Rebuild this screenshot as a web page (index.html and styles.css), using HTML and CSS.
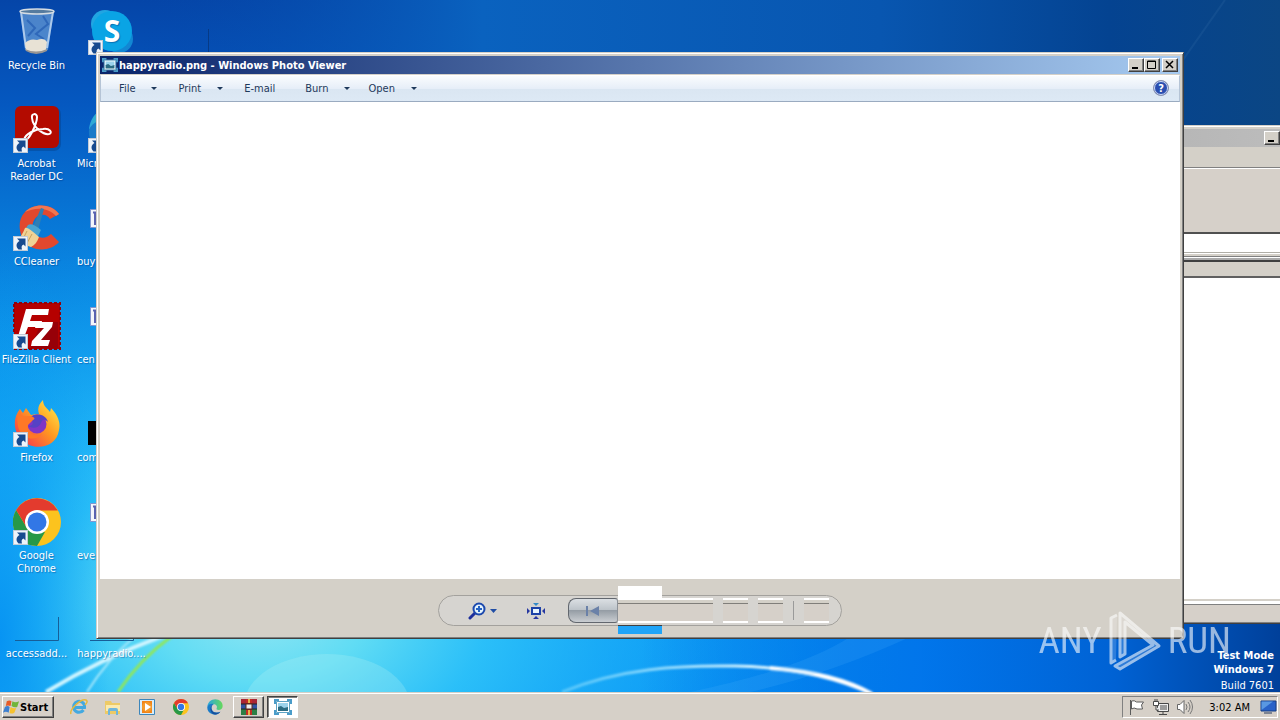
FILE: index.html
```html
<!DOCTYPE html>
<html lang="en">

<head>
  <meta charset="UTF-8">
  <meta name="viewport" content="width=device-width, initial-scale=1.0">
  <title>happyradio.png - Windows Photo Viewer</title>
  <link rel="stylesheet" href="styles.css">
</head>

<body>
  <!-- shared symbols -->
  <svg class="defs" width="0" height="0" aria-hidden="true">
    <defs>
      <symbol id="shortcut" viewBox="0 0 15 15">
        <rect x=".5" y=".5" width="14" height="14" fill="#eef4fb" stroke="#c3cbd6" />
        <path d="M4 2.500h8.500v8L10.500 8.500C8.600 9.300 8.200 11 9 13.500H5.500C2.500 10.500 3 7 6.500 5z" fill="#174a8f" />
      </symbol>
      <symbol id="chrome" viewBox="0 0 48 48">
        <circle cx="24" cy="24" r="24" fill="#fcc31e" />
        <path d="M3.200 12L14 30l10 5 8-1-8 14A24 24 0 0 1 3.200 12z" fill="#279847" />
        <path d="M3.200 12L14 30 24 24V12.500h20.800A24 24 0 0 0 3.200 12z" fill="#e33b2e" />
        <circle cx="24" cy="24" r="12" fill="#fff" />
        <circle cx="24" cy="24" r="9.500" fill="#3277e6" />
      </symbol>
      <symbol id="doc" viewBox="0 0 48 48">
        <path d="M2.500 5.500h20v18h-20z" fill="#f4f6fc" stroke="#8297d0" />
        <path d="M5 8.500h5M7 8v13" stroke="#5a63b0" stroke-width="2" />
      </symbol>
      <symbol id="edge" viewBox="0 0 48 48">
        <linearGradient id="edgeGreen" x1="0" y1="0" x2="1" y2="0">
          <stop offset="0" stop-color="#2aa5e0" />
          <stop offset="1" stop-color="#66d95a" />
        </linearGradient>
        <path d="M1 24C2 10 12 1 25 1c13 0 22 9 22 20 0 8-6 12-12 12-5 0-8-2-6-5 3-6-2-12-9-12C11 16 4 19 1 24z" fill="url(#edgeGreen)" />
        <path d="M1 24c3-8 11-11 19-9-6 3-8 9-6 16 3 9 14 13 26 7C34 47 24 49 15 45 5 41 0 33 1 24z" fill="#1a7bc8" />
        <path d="M19 16c-7 5-8 16-1 22 6 5 15 4 22 0-6 9-16 10-23 6-9-6-9-23 2-28z" fill="#174f9c" />
      </symbol>
      <symbol id="photo" viewBox="0 0 18 18">
        <path d="M1 6V2h4M13 2h4v4M17 12v4h-4M5 16H1v-4" fill="none" stroke="#4a9cc9" stroke-width="2" />
        <path d="M2.500 3.500h13v11h-13z" fill="#fff" stroke="#5da3c4" />
        <path d="M4 5h10v5H4z" fill="#9bd3ec" />
        <path d="M4 13V9l3-1 3 2 4-1v4z" fill="#2b6c83" />
      </symbol>
    </defs>
  </svg>

  <main class="desktop">
    <svg class="wallpaper" viewBox="0 0 1280 693" preserveAspectRatio="none" aria-hidden="true">
      <defs>
        <linearGradient id="sky" x1="0" y1="0" x2="0" y2="1">
          <stop offset="0" stop-color="#0545a8" />
          <stop offset=".15" stop-color="#0558c0" />
          <stop offset=".35" stop-color="#087cda" />
          <stop offset=".65" stop-color="#079cee" />
          <stop offset="1" stop-color="#0592f4" />
        </linearGradient>
        <radialGradient id="glow" gradientUnits="userSpaceOnUse" cx="0" cy="0" r="1" gradientTransform="translate(260 610) scale(600 400)">
          <stop offset="0" stop-color="#92e6f3" />
          <stop offset=".18" stop-color="#60dcf4" />
          <stop offset=".38" stop-color="#2fc4f9" stop-opacity=".9" />
          <stop offset="1" stop-color="#10a0fa" stop-opacity="0" />
        </radialGradient>
        <radialGradient id="leftside" gradientUnits="userSpaceOnUse" cx="0" cy="0" r="1" gradientTransform="translate(0 640) scale(110 400)">
          <stop offset="0" stop-color="#0490f2" stop-opacity=".9" />
          <stop offset="1" stop-color="#0a9cf0" stop-opacity="0" />
        </radialGradient>
        <linearGradient id="dusk" x1="0" y1="0" x2="1" y2="0">
          <stop offset=".5" stop-color="#0066e0" stop-opacity="0" />
          <stop offset=".72" stop-color="#0072ea" stop-opacity=".9" />
          <stop offset=".87" stop-color="#0062d4" />
          <stop offset="1" stop-color="#00409a" />
        </linearGradient>
        <linearGradient id="topband" x1="0" y1="0" x2="1" y2="0">
          <stop offset="0" stop-color="#0548aa" stop-opacity="0" />
          <stop offset=".3" stop-color="#0a62bf" />
          <stop offset=".65" stop-color="#0856b0" />
          <stop offset=".85" stop-color="#044391" />
          <stop offset="1" stop-color="#0b4684" />
        </linearGradient>
        <linearGradient id="arc" x1="0" y1="0" x2="1" y2="0">
          <stop offset="0" stop-color="#8fe0ff" stop-opacity=".5" />
          <stop offset=".6" stop-color="#d5f4ff" />
          <stop offset="1" stop-color="#fff" />
        </linearGradient>
        <filter id="soft">
          <feGaussianBlur stdDeviation="1" />
        </filter>
      </defs>
      <rect width="1280" height="693" fill="url(#sky)" />
      <rect width="1280" height="693" fill="url(#glow)" />
      <rect width="150" height="693" fill="url(#leftside)" />
      <rect y="400" width="1280" height="293" fill="url(#dusk)" />
      <rect x="140" width="1140" height="130" fill="url(#topband)" />
      <path d="M1183 60L1225 0" stroke="#5a8fc0" stroke-width="2" opacity=".12" />
      <g filter="url(#soft)" fill="none">
        <path d="M46 693Q100 660 165 636" stroke="#d0f5ff" stroke-width="4" />
        <path d="M87 693Q108 660 134 638" stroke="#a5e8fb" stroke-width="2" />
        <path d="M118 693Q140 660 172 637" stroke="#8fe75c" stroke-width="3" />
        <path d="M562 693C620 669 680 666 735 667C790 668 835 678 872 695" stroke="url(#arc)" stroke-width="3" />
        <path d="M770 669Q835 674 872 695" stroke="#fff" stroke-width="4" />
      </g>
      <ellipse cx="327" cy="707" rx="83" ry="52" fill="#b9f4f5" opacity=".25" />
      <path d="M690 693Q800 670 850 638H910Q830 675 750 693z" fill="#5cb9ff" opacity=".15" />
    </svg>

    <ul class="icons">
      <li class="icon"><a href="#">
          <svg viewBox="0 0 48 48">
            <path d="M7 3l5 39q12 6 23 0l6-39z" fill="#92bfe8" fill-opacity=".5" />
            <path d="M8 4l5 36M40 4l-6 36" stroke="#d5e7fa" stroke-width="2" opacity=".7" />
            <path d="M14 12l8 8-7 8M30 8l5 8-12 10 8 5" fill="none" stroke="#1c55ad" stroke-width="2" opacity=".6" />
            <path d="M12 35q5-5 12-3 7-3 10 2l-1 8q-10 5-20 0z" fill="#e8e2d5" />
            <path d="M12 41q11 5 22 0v2q-11 6-21 0z" fill="#969493" />
            <ellipse cx="24" cy="3.500" rx="17" ry="2.500" fill="#557b9f" stroke="#d5dce2" stroke-width="1.500" />
          </svg>
          <span>Recycle Bin</span></a></li>
      <li class="icon"><a href="#">
          <svg viewBox="0 0 48 48">
            <rect x="3" y="1" width="45" height="44" rx="7" fill="#063c83" opacity=".4" />
            <rect x="2" width="44" height="42" rx="6" fill="#b30b00" />
            <path d="M11 34c4 3 13-16 13-23 0-4-6-4-5 1 1 10 12 17 17 16 4-1 1-6-6-5-8 0-18 5-19 11z" fill="none" stroke="#fff" stroke-width="2" />
            <use href="#shortcut" x="0" y="32" width="15" height="15" />
          </svg>
          <span>Acrobat<br>Reader DC</span></a></li>
      <li class="icon"><a href="#">
          <svg viewBox="0 0 48 48">
            <path d="M46 10C40 0 22-2 12 8 2 18 7 37 18 43c10 5 22 2 28-5l-8-8c-5 5-13 5-17-1-4-7 0-17 7-18 4-1 7 1 9 4z" fill="#e2482e" />
            <path d="M12 8C20-1 38-1 46 10l-3 2C35 3 22 3 12 8z" fill="#f27650" />
            <path d="M28 4l3 1-6 21-6-1z" fill="#2e7eb5" />
            <path d="M15 21q4-3 13 5l-4 8-13-7z" fill="#48a4d1" />
            <path d="M12 24q2-2 14 9c-2 5-4 8-8 10L3 38q6-6 9-14z" fill="#efd295" />
            <path d="M14 27l-6 12M19 30l-6 11" stroke="#c8a15d" />
            <use href="#shortcut" x="0" y="32" width="15" height="15" />
          </svg>
          <span>CCleaner</span></a></li>
      <li class="icon"><a href="#">
          <svg viewBox="0 0 48 48">
            <rect x="1" y="1" width="46" height="46" fill="#b50000" stroke="#930007" stroke-width="2" stroke-dasharray="3 2" />
            <path d="M28 20h17v26H18z" fill="#970008" />
            <path d="M13 7h23l-1 6H19l-2 6h12l-1 6H15l-5 13H4z" fill="#fff" />
            <path d="M24 20h16l-1 5-11 13h9l-2 6H18l1-5 12-13h-9z" fill="#fff" />
            <use href="#shortcut" x="0" y="32" width="15" height="15" />
          </svg>
          <span>FileZilla Client</span></a></li>
      <li class="icon"><a href="#">
          <svg viewBox="0 0 48 48">
            <linearGradient id="fire" x1="1" y1="0" x2="0" y2="1">
              <stop offset="0" stop-color="#fff44f" />
              <stop offset=".45" stop-color="#ff9a20" />
              <stop offset="1" stop-color="#f52356" />
            </linearGradient>
            <path d="M30 0c0 6 4 8 7 12l1-4c6 6 10 14 8 22C43 51 14 52 5 35 0 27 1 16 7 9l3 4 3-5 5 7c4-1 6-1 8-1-2-6 0-10 4-14z" fill="url(#fire)" />
            <circle cx="24" cy="24" r="9.500" fill="#8035c6" />
            <path d="M17 18c5-6 16-4 18 4-4-4-6-2-7 1-2 5-8 6-13 3 6 0 6-4 2-8z" fill="#5542c5" />
            <path d="M7 9c0 9 6 7 11 7 3 1 5 3 2 4l-5 5c-2 7 7 13 14 9-7 9-22 4-24-8C4 20 4 14 7 9z" fill="#ff7826" />
            <use href="#shortcut" x="0" y="32" width="15" height="15" />
          </svg>
          <span>Firefox</span></a></li>
      <li class="icon"><a href="#">
          <svg viewBox="0 0 48 48">
            <use href="#chrome" width="48" height="48" />
            <use href="#shortcut" x="0" y="32" width="15" height="15" />
          </svg>
          <span>Google<br>Chrome</span></a></li>
      <li class="icon"><a href="#">
          <svg viewBox="0 0 48 48">
            <path d="M2 44.500h43.500V21" fill="none" stroke="#175e98" />
          </svg>
          <span>accessadd...</span></a></li>
      <li class="icon"><a href="#" aria-label="Skype">
          <svg viewBox="0 0 48 48">
            <circle cx="17" cy="16" r="14" fill="#21a5e2" />
            <circle cx="31" cy="31" r="14" fill="#1287d3" />
            <circle cx="24" cy="23" r="20" fill="#0aa4e5" />
            <text class="skype-letter" x="24" y="34" text-anchor="middle">S</text>
            <use href="#shortcut" x="0" y="32" width="15" height="15" />
          </svg></a></li>
      <li class="icon cut"><a href="#">
          <svg viewBox="0 0 48 48">
            <use href="#edge" width="48" height="48" />
            <use href="#shortcut" x="0" y="32" width="15" height="15" />
          </svg>
          <span>Micr</span></a></li>
      <li class="icon cut"><a href="#"><svg viewBox="0 0 48 48">
            <use href="#doc" /></svg><span>buy</span></a></li>
      <li class="icon cut"><a href="#"><svg viewBox="0 0 48 48">
            <use href="#doc" /></svg><span>cen</span></a></li>
      <li class="icon cut"><a href="#"><svg viewBox="0 0 48 48">
            <path d="M0 21h48v24H0z" /></svg><span>com</span></a></li>
      <li class="icon cut"><a href="#"><svg viewBox="0 0 48 48">
            <use href="#doc" /></svg><span>eve</span></a></li>
      <li class="icon"><a href="#">
          <svg viewBox="0 0 48 48">
            <path d="M2 44.500h43.500V21" fill="none" stroke="#175e98" />
          </svg>
          <span>happyradio....</span></a></li>
      <li class="icon"><a href="#" aria-label="File">
          <svg viewBox="0 0 48 48">
            <path d="M2 44.500h43.500V21" fill="none" stroke="#063a86" />
          </svg></a></li>
    </ul>

    <div class="build">
      <b>Test Mode</b>
      <b>Windows 7</b>
      <span>Build 7601</span>
    </div>

    <!-- window behind the viewer -->
    <section class="window back">
      <header class="title-bar">
        <div class="title-buttons"><button class="btn" aria-label="Minimize"><svg viewBox="0 0 12 10">
              <path d="M2 7h6v2H2z" /></svg></button></div>
      </header>
      <div class="back-menu"></div>
      <div class="back-tools"></div>
      <div class="back-address"></div>
      <div class="back-gap"></div>
      <div class="back-columns"></div>
      <div class="back-list"></div>
      <div class="back-status"></div>
    </section>

    <section class="window viewer">
      <header class="title-bar">
        <svg class="title-icon" viewBox="0 0 18 18">
          <use href="#photo" /></svg>
        <h1>happyradio.png - Windows Photo Viewer</h1>
        <div class="title-buttons">
          <button class="btn" aria-label="Minimize"><svg viewBox="0 0 12 10">
              <path d="M2 7h6v2H2z" /></svg></button>
          <button class="btn" aria-label="Maximize"><svg viewBox="0 0 12 10">
              <path d="M1.500 1h8v7.500h-8zM1 1.500h9" fill="none" stroke="#000" /></svg></button>
          <button class="btn close" aria-label="Close"><svg viewBox="0 0 12 10">
              <path d="M2 1l7 7M9 1L2 8" stroke="#000" stroke-width="1.500" /></svg></button>
        </div>
      </header>
      <nav class="menu">
        <button class="drop">File</button>
        <button class="drop">Print</button>
        <button class="mail">E-mail</button>
        <button class="drop">Burn</button>
        <button class="drop">Open</button>
        <button class="help" aria-label="Help"><svg viewBox="0 0 18 18">
            <circle cx="9" cy="9" r="7.500" fill="#2a4eb0" stroke="#8d94ae" />
            <circle cx="9" cy="9" r="6.500" fill="none" stroke="#cfdaf5" />
            <text x="9" y="13" text-anchor="middle">?</text>
          </svg></button>
      </nav>
      <div class="photo"></div>
      <footer class="controls">
        <div class="pill">
          <button class="zoom" aria-label="Zoom">
            <svg viewBox="0 0 30 18">
              <path d="M2 16l5-5" stroke="#1d2f9c" stroke-width="3" stroke-linecap="round" />
              <circle cx="11" cy="7" r="5.500" fill="#e4f3fd" stroke="#1b48ad" stroke-width="2" />
              <path d="M8 7h6M11 4v6" stroke="#2462c5" stroke-width="2" />
              <path d="M22 7h7l-3.500 4z" fill="#204da5" />
            </svg>
          </button>
          <button class="fit" aria-label="Actual size">
            <svg viewBox="0 0 18 18">
              <path d="M5 6h8v6H5z" fill="#e8f6ff" stroke="#1d43a8" stroke-width="2" />
              <path d="M6 1h6L9 4z" fill="#338ac8" />
              <path d="M6 17h6l-3-3zM0 6v6l3-3zM18 6v6l-3-3z" fill="#2637a0" />
            </svg>
          </button>
          <button class="prev" aria-label="Previous">
            <svg viewBox="0 0 16 12">
              <path d="M1 1h2v10H1zM14 1v10L5 6z" fill="#6a81a8" />
            </svg>
          </button>
          <div class="slot wide"></div>
          <div class="slot"></div>
          <div class="slot"></div>
          <div class="divider"></div>
          <div class="slot"></div>
          <div class="patch"></div>
        </div>
      </footer>
    </section>

    <div class="watermark">
      <span>ANY</span>
      <svg viewBox="0 0 58 66">
        <path d="M11 7L5 10v45l5-3M14 5l39 33-39 23-5-3 38-21L19 14v32l-5 3z" fill="#fff" fill-opacity=".3" stroke="#fff" stroke-width="3" stroke-linejoin="round" />
      </svg>
      <span>RUN</span>
    </div>
  </main>

  <footer class="taskbar">
    <button class="start">
      <svg viewBox="0 0 18 16">
        <path d="M4 2q3-2 5 0L8 7Q5 6 3 7z" fill="#e65a27" />
        <path d="M10 2q3 2 7 0l-2 6q-3 1-6-1z" fill="#71b53a" />
        <path d="M2 8q3-2 5 0l-1 6q-3-2-6 0z" fill="#3d7fd0" />
        <path d="M8 8q3 2 6 1l-2 5q-3 2-5 0z" fill="#f6c22f" />
      </svg>Start</button>
    <nav class="tasks">
      <a href="#" class="task" aria-label="Internet Explorer"><svg viewBox="0 0 18 18">
          <path d="M13.500 12A5.500 5.500 0 1 1 14.500 9.500H5" fill="none" stroke="#43a9e0" stroke-width="3" />
          <path d="M1 16C-1 12 11 0 16 2c2 1 1 3-1 5" fill="none" stroke="#e7b93c" stroke-width="1.500" /></svg></a>
      <a href="#" class="task" aria-label="Explorer"><svg viewBox="0 0 18 18">
          <path d="M1 3h6l1 2h8v11H1z" fill="#edca65" />
          <path d="M2 7h14v6H2z" fill="#fbeaae" />
          <path d="M4 17v-5q0-2 2-2h6q2 0 2 2v5h-2v-4H6v4z" fill="#70b6db" /></svg></a>
      <a href="#" class="task" aria-label="Media Player"><svg viewBox="0 0 18 18">
          <path d="M1.500 1.500h15v15h-15z" fill="#d9edf9" stroke="#3d86bb" />
          <path d="M4 3h10v12H4z" fill="#f18419" />
          <circle cx="9" cy="9" r="5" fill="#f49a2c" />
          <path d="M7 5v8l6-4z" fill="#fff" /></svg></a>
      <a href="#" class="task" aria-label="Chrome"><svg viewBox="-3 -3 54 54">
          <use href="#chrome" width="48" height="48" /></svg></a>
      <a href="#" class="task" aria-label="Edge"><svg viewBox="-3 -3 54 54">
          <use href="#edge" width="48" height="48" /></svg></a>
      <a href="#" class="task open" aria-label="WinRAR"><svg viewBox="0 0 18 18">
          <path d="M1 1h16v5H1z" fill="#a92636" />
          <path d="M1 6h16v5H1z" fill="#3054a4" />
          <path d="M1 11h16v6H1z" fill="#2c7e45" />
          <path d="M6 1h6v16H6z" fill="#c22b25" />
          <path d="M1 6h16M1 11h16" stroke="#222" />
          <path d="M6 6h6v5H6z" fill="#eee" stroke="#5c291c" />
          <path d="M9 1v4M9 12v5" stroke="#e5b54c" stroke-width="2" /></svg></a>
      <a href="#" class="task open active" aria-label="Photo Viewer"><svg viewBox="0 0 18 18">
          <use href="#photo" /></svg></a>
    </nav>
    <div class="tray">
      <svg viewBox="0 0 18 18">
        <path d="M2.500 2v15M3.500 3q3-1 5 1h7l-2 3 1 4H9Q6 9 3.500 11z" fill="#fff" stroke="#5c5c5c" /></svg>
      <svg viewBox="0 0 18 18">
        <path d="M5.500 5.500h11v8h-11zM11 14v2M7 16.500h8" fill="#eee" stroke="#484848" />
        <path d="M8 7h7v5H8z" fill="#9b9b9b" />
        <path d="M1.500 3.500h5v4h-5zM3 1v2M5 1v2M4 8v4h3" fill="#fff" stroke="#484848" /></svg>
      <svg viewBox="0 0 18 18">
        <path d="M1.500 6.500H4l4-4v13l-4-4H1.500z" fill="#fff" stroke="#666" />
        <path d="M10 6q2 3 0 6M12 4q4 5 0 10M14 2q5 7 0 14" fill="none" stroke="#777" /></svg>
      <time>3:02 AM</time>
      <svg viewBox="0 0 18 18">
        <path d="M2 3h15v10H2z" fill="#2862c8" stroke="#173e83" />
        <path d="M2.500 12L14 3.500h-11.500z" fill="#5998e2" />
        <path d="M5 15h8" stroke="#24395d" /></svg>
    </div>
  </footer>
</body>

</html>
```
FILE: styles.css
```css
* {
  box-sizing: border-box;
}

body {
  display: flex;
  flex-direction: column;
  height: 100vh;
  margin: 0;
  overflow: hidden;
  font-family: "DejaVu Sans Condensed", "DejaVu Sans", sans-serif;
  font-size: 11px;
  line-height: 13px;
  color: #000;
}

a {
  color: inherit;
  text-decoration: none;
}

button {
  padding: 0;
  border: 0;
  background: none;
  font: inherit;
  color: inherit;
}

svg {
  display: block;
}

.defs {
  position: absolute;
}

/* desktop */
.desktop {
  position: relative;
  flex: 1;
  min-height: 0;
  overflow: hidden;
  background-color: #0880dc;
}

.wallpaper {
  position: absolute;
  width: 100%;
  height: 100%;
}

.icons {
  position: relative;
  display: grid;
  grid-auto-flow: column;
  grid-template-rows: repeat(7, 98px);
  grid-auto-columns: 73px;
  justify-content: start;
  column-gap: 2px;
  margin: 0;
  padding: 8px 0 0;
  list-style: none;
}

.icon a {
  display: block;
  text-align: center;
  white-space: nowrap;
  color: #fff;
  text-shadow: 1px 1px 1px rgba(0, 40, 110, .4);
}

.icon svg {
  width: 48px;
  height: 48px;
  margin: 0 auto 3px;
}

.icon span {
  display: block;
}

.icon.cut span {
  padding-left: 2px;
  text-align: left;
}

.skype-letter {
  font-family: "Open Sans", sans-serif;
  font-size: 30px;
  font-weight: bold;
  fill: #fff;
}

.build {
  position: absolute;
  right: 6px;
  bottom: 0;
  z-index: 4;
  display: flex;
  flex-direction: column;
  gap: 1px;
  text-align: right;
  color: #fff;
}

.build span {
  padding: 2px 0 0;
}

/* windows */
.window {
  position: absolute;
  display: flex;
  flex-direction: column;
  padding: 2px;
  border: 1px solid;
  border-color: #d4d0c8 #404040 #404040 #d4d0c8;
  background-color: #d4d0c8;
  box-shadow: inset 1px 1px #fff, inset -1px -1px #808080;
}

.viewer {
  top: 52px;
  right: 96px;
  bottom: 53px;
  left: 96px;
  padding: 2px 3px;
}

.back {
  top: 125px;
  right: -80px;
  bottom: 68px;
  left: 70%;
}

.title-bar {
  display: flex;
  align-items: center;
  flex: none;
  height: 20px;
  padding: 0 2px;
  background: linear-gradient(to right, #0a246a, #a6caf0);
  border: 1px solid #d4d0c8;
  border-width: 1px 0;
}

.title-icon {
  width: 16px;
  height: 16px;
  margin-right: 1px;
}

.title-bar h1 {
  margin: 0;
  font-size: 11px;
  color: #fff;
}

.title-buttons {
  display: flex;
  margin-left: auto;
}

.btn {
  width: 16px;
  height: 14px;
  padding: 1px;
  border: 1px solid;
  border-color: #fff #404040 #404040 #fff;
  background-color: #d4d0c8;
  box-shadow: inset -1px -1px #808080;
}

.btn svg {
  width: 12px;
  height: 10px;
}

.btn.close {
  margin-left: 2px;
}

.menu {
  display: flex;
  align-items: center;
  flex: none;
  height: 27px;
  padding: 0 9px 1px 18px;
  border: 1px solid #b5c4d6;
  border-top-color: #fff;
  border-bottom-color: #9aabc0;
  background: linear-gradient(#fafcfe, #e6eef8 50%, #dae6f2 51%, #dde9f5);
  color: #1e395b;
}

.menu .drop {
  display: flex;
  align-items: center;
  gap: 16px;
  margin-right: 21px;
}

.menu .drop::after {
  content: "";
  border: 3px solid transparent;
  border-top-color: #1e395b;
  border-bottom: 0;
}

.menu .mail {
  margin-right: 30px;
}

.menu .drop:nth-of-type(4) {
  margin-right: 18px;
}

.menu .help {
  margin-left: auto;
}

.help svg {
  width: 18px;
  height: 18px;
}

.help text {
  font-size: 11px;
  font-weight: bold;
  fill: #fff;
}

.photo {
  flex: 1;
  background-color: #fff;
}

.controls {
  display: flex;
  align-items: center;
  justify-content: center;
  flex: none;
  height: 57px;
  padding-top: 6px;
}

.pill {
  position: relative;
  display: flex;
  align-items: center;
  width: 404px;
  height: 31px;
  padding: 0 12px 0 29px;
  border: 1px solid #a3a19d;
  border-radius: 16px;
  background-color: #d6d4d0;
}

.zoom svg {
  width: 30px;
  height: 18px;
}

.fit {
  margin: 0 23px 0 29px;
}

.fit svg {
  width: 18px;
  height: 18px;
}

.prev {
  display: grid;
  place-items: center;
  width: 50px;
  height: 25px;
  border: 1px solid #62676e;
  border-right-color: #8d9298;
  border-radius: 8px 3px 3px 8px;
  background: linear-gradient(#dbdfe3, #bcc3c9 48%, #959da5 50%, #c9cdd1);
}

.prev svg {
  width: 16px;
  height: 12px;
}

/* empty button slots */
.slot {
  width: 25px;
  height: 25px;
  margin-left: 10px;
  border-top: 2px solid #fff;
  border-bottom: 2px solid #fff;
  background: linear-gradient(#d4d0c8 3px, #807e7a 3px, #807e7a 4px, #d6d0c9 4px);
}

.slot.wide {
  width: 95px;
  margin-left: 0;
}

.divider {
  height: 19px;
  margin-left: 10px;
  border-left: 1px solid #9a9a9a;
}

.patch {
  position: absolute;
  top: -10px;
  left: 179px;
  width: 44px;
  height: 48px;
  border-top: 12px solid #fff;
  border-bottom: 8px solid #1fa4f8;
  box-shadow: inset 0 -1px #404040;
}

/* window behind */
.back .title-bar {
  background: linear-gradient(to right, #a8a8a8, #c0c0c0);
}

.back .title-buttons {
  margin-right: 75px;
}

.back-menu {
  height: 20px;
  border-bottom: 1px solid #808080;
}

.back-tools {
  height: 66px;
  border-top: 1px solid #fff;
  border-bottom: 2px solid #505050;
  background-color: #d6d0c9;
}

.back-address {
  height: 18px;
  background-color: #fff;
}

.back-gap {
  height: 10px;
  border-top: 1px solid #b0aea6;
  border-bottom: 2px solid #404040;
  background: linear-gradient(#fff 1px, #d4d0c8 1px, #d4d0c8 3px, #808080 3px, #808080 4px, #fff 4px, #fff 5px, #aaa 5px);
}

.back-columns {
  height: 16px;
  border-bottom: 2px solid #606060;
}

.back-list {
  flex: 1;
  background-color: #fff;
}

.back-status {
  height: 22px;
  border-top: 2px solid #d4d0c8;
  background: linear-gradient(#fff 3px, #808080 3px, #808080 4px, #d6d0c9 4px);
}

.watermark {
  position: absolute;
  right: 49px;
  bottom: 18px;
  z-index: 3;
  display: flex;
  align-items: center;
  gap: 4px;
  font-family: "Roboto Condensed", Roboto, sans-serif;
  font-size: 37px;
  line-height: 40px;
  color: #fff;
  opacity: .6;
}

.watermark svg {
  width: 58px;
  height: 66px;
}

/* taskbar */
.taskbar {
  display: flex;
  align-items: center;
  flex: none;
  height: 28px;
  padding: 1px 2px 0;
  border-top: 1px solid #d4d0c8;
  background-color: #d6d0c8;
  box-shadow: inset 0 1px #fff;
}

.start {
  display: flex;
  align-items: center;
  width: 52px;
  height: 22px;
  border: 1px solid;
  border-color: #fff #404040 #404040 #fff;
  box-shadow: inset -1px -1px #808080;
  font-size: 11px;
  font-weight: bold;
}

.start svg {
  width: 17px;
  height: 16px;
}

.tasks {
  display: flex;
  gap: 3px;
  margin-left: 9px;
}

.task {
  display: grid;
  place-items: center;
  width: 31px;
  height: 22px;
}

.task svg {
  width: 18px;
  height: 18px;
}

.task.open {
  border: 1px solid;
  border-color: #fff #404040 #404040 #fff;
  box-shadow: inset -1px -1px #808080;
}

.task.active {
  border-color: #404040 #fff #fff #404040;
  background-color: #fff;
  box-shadow: inset 1px 1px #808080;
}

.tray {
  display: flex;
  align-items: center;
  gap: 6px;
  height: 22px;
  margin-left: auto;
  padding: 0 0 0 5px;
  border: 1px solid;
  border-color: #808080 #fff #fff #808080;
}

.tray svg {
  width: 18px;
  height: 18px;
}

.tray time {
  margin: 0 3px 0 9px;
}
```
